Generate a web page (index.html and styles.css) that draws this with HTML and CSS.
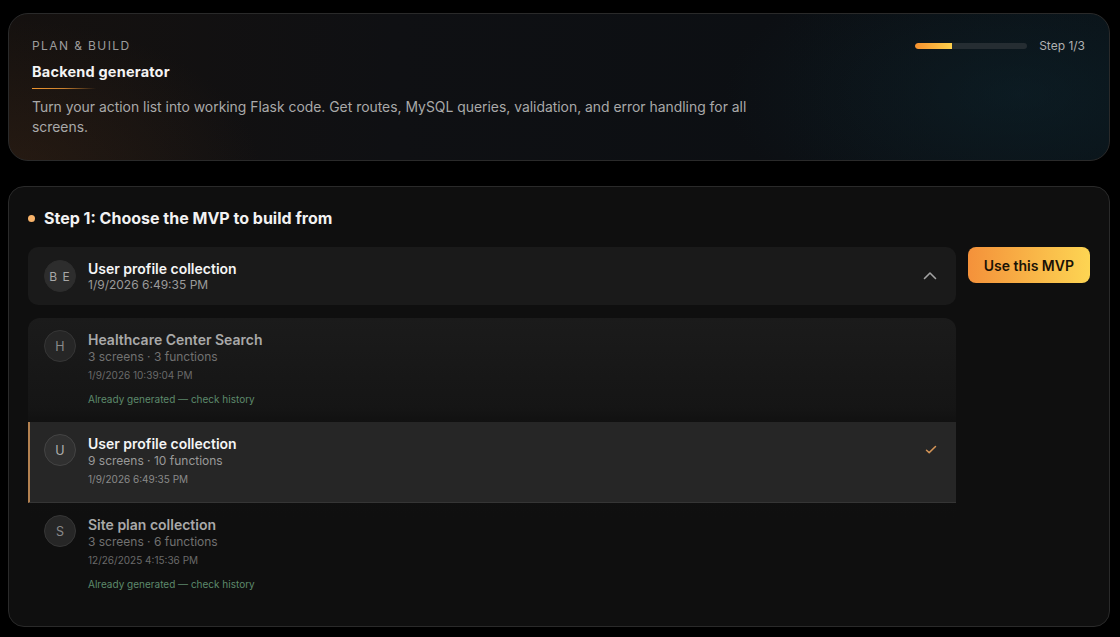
FILE: index.html
```html
<!DOCTYPE html>
<html lang="en">
<head>
<meta charset="utf-8">
<title>Backend generator</title>
<link rel="stylesheet" href="styles.css">
</head>
<body>
<section class="hero">
  <div class="hero-text">
    <div class="eyebrow">PLAN &amp; BUILD</div>
    <h1 class="hero-title">Backend generator</h1>
    <div class="hero-rule"></div>
    <p class="hero-desc">Turn your action list into working Flask code. Get routes, MySQL queries, validation, and error handling for all screens.</p>
  </div>
  <div class="progress">
    <div class="progress-track"><div class="progress-fill" style="width:33%"></div></div>
    <span class="progress-label">Step 1/3</span>
  </div>
</section>

<section class="panel">
  <h2 class="step-title"><span class="dot"></span>Step 1: Choose the MVP to build from</h2>
  <div class="select-row">
    <div class="selector">
      <div class="avatar avatar-lg">B E</div>
      <div class="sel-text">
        <div class="sel-name">User profile collection</div>
        <div class="sel-date">1/9/2026 6:49:35 PM</div>
      </div>
      <svg class="chevron" width="16" height="16" viewBox="0 0 16 16"><path d="M2.5 10.5 8 5l5.5 5.5" fill="none" stroke="#a3a3a3" stroke-width="1.6" stroke-linecap="round" stroke-linejoin="round"/></svg>
    </div>
    <button class="use-btn">Use this MVP</button>
  </div>

  <div class="list">
    <div class="item item-done">
      <div class="avatar">H</div>
      <div class="item-body">
        <div class="item-name">Healthcare Center Search</div>
        <div class="item-meta">3 screens · 3 functions</div>
        <div class="item-date">1/9/2026 10:39:04 PM</div>
        <div class="item-note">Already generated — check history</div>
      </div>
    </div>
    <div class="item item-active">
      <div class="avatar">U</div>
      <div class="item-body">
        <div class="item-name">User profile collection</div>
        <div class="item-meta">9 screens · 10 functions</div>
        <div class="item-date">1/9/2026 6:49:35 PM</div>
      </div>
      <svg class="check" width="14" height="14" viewBox="0 0 14 14"><path d="M2.5 7.2 5.2 9.6 11.5 3.5" fill="none" stroke="#d39457" stroke-width="1.5" stroke-linecap="round" stroke-linejoin="round"/></svg>
    </div>
    <div class="item item-done">
      <div class="avatar">S</div>
      <div class="item-body">
        <div class="item-name">Site plan collection</div>
        <div class="item-meta">3 screens · 6 functions</div>
        <div class="item-date">12/26/2025 4:15:36 PM</div>
        <div class="item-note">Already generated — check history</div>
      </div>
    </div>
  </div>
</section>
</body>
</html>
```

FILE: styles.css
```css
* { box-sizing: border-box; }
html, body { background: #000; }
body {
  margin: 0;
  padding: 13px 10px 0 8px;
  font-family: Inter, "Noto Sans", "Liberation Sans", sans-serif;
  color: #e5e5e5;
}

.hero {
  display: flex;
  justify-content: space-between;
  align-items: flex-start;
  height: 148px;
  padding: 24px 24px 24px 23px;
  border: 1px solid #2a2a2a;
  border-radius: 20px;
  background:
    radial-gradient(ellipse 420px 200px at 1010px 80px, rgba(14, 40, 50, 0.45), transparent 70%),
    radial-gradient(ellipse 360px 220px at 0 160px, rgba(60, 38, 22, 0.45), transparent 70%),
    linear-gradient(90deg, #15110f 0%, #0f1013 35%, #0c0f13 70%, #0a1116 100%);
}
.eyebrow {
  font-size: 12px;
  letter-spacing: 1.4px;
  color: #9c9c9c;
  line-height: 16px;
}
.hero-title {
  margin: 8px 0 0;
  font-size: 14.5px;
  font-weight: 700;
  color: #f4f4f4;
  line-height: 20px;
  letter-spacing: 0.2px;
}
.hero-rule {
  width: 64px;
  height: 1px;
  margin: 6px 0 8px;
  background: linear-gradient(90deg, #f0962f, #c9802f 50%, rgba(200, 130, 50, 0));
}
.hero-desc {
  margin: 0;
  max-width: 740px;
  font-size: 13.9px;
  line-height: 20px;
  color: #a9a9a9;
}
.progress {
  display: flex;
  align-items: center;
  gap: 12px;
  margin-top: 0;
}
.progress-track {
  width: 112px;
  height: 6px;
  border-radius: 3px;
  background: #252d32;
  overflow: hidden;
}
.progress-fill {
  height: 100%;
  border-radius: 3px 0 0 3px;
  background: linear-gradient(90deg, #f6912e, #fdd04c);
}
.progress-label {
  font-size: 12px;
  color: #b0b0b0;
  line-height: 16px;
}

.panel {
  margin-top: 25px;
  padding: 21px 19px 19px;
  border: 1px solid #2a2a2a;
  border-radius: 16px;
  background: #0f0f0f;
}
.step-title {
  display: flex;
  align-items: center;
  gap: 9px;
  margin: 0 0 19px;
  font-size: 16px;
  font-weight: 700;
  line-height: 20px;
  color: #f2f2f2;
}
.dot {
  width: 7px;
  height: 7px;
  border-radius: 50%;
  background: #f8b36a;
}

.select-row {
  display: flex;
  align-items: flex-start;
  gap: 12px;
}
.selector {
  flex: 1;
  display: flex;
  align-items: center;
  height: 58px;
  padding: 0 18px 0 16px;
  border-radius: 10px;
  background: #1a1a1a;
}
.sel-text { flex: 1; margin-left: 12px; }
.sel-name {
  font-size: 14px;
  font-weight: 600;
  line-height: 17px;
  color: #f5f5f5;
}
.sel-date {
  font-size: 12px;
  line-height: 15px;
  color: #9a9a9a;
}
.chevron { display: block; }
.use-btn {
  height: 36px;
  padding: 0 16px;
  border: 0;
  border-radius: 8px;
  background: linear-gradient(90deg, #f4913a, #fdd553);
  font-family: inherit;
  font-size: 14px;
  font-weight: 600;
  color: #1a1206;
}

.avatar {
  flex: none;
  width: 32px;
  height: 32px;
  border-radius: 50%;
  display: flex;
  align-items: center;
  justify-content: center;
  background: #262626;
  border: 1px solid #363636;
  font-size: 12.5px;
  color: #999;
}
.avatar-lg {
  background: #2d2d2d;
  border-color: #2d2d2d;
  letter-spacing: 1px;
  font-size: 12px;
  color: #a8a8a8;
}

.list {
  margin-top: 13px;
  width: calc(100% - 134px);
  border-radius: 12px 12px 0 0;
  background: linear-gradient(180deg, #1b1b1b 0, #151515 90px, #111 104px, #0f0f0f 200px);
}
.item {
  display: flex;
  align-items: flex-start;
  gap: 12px;
  padding: 12px 18px 16px 14px;
  border-left: 2px solid transparent;
}
.item-body { flex: 1; }
.item-name {
  font-size: 14px;
  font-weight: 600;
  line-height: 19px;
  color: #a9a9a9;
}
.item-meta {
  font-size: 12px;
  line-height: 16px;
  color: #717171;
}
.item-date {
  margin-top: 3px;
  font-size: 10px;
  line-height: 15px;
  color: #6a6a6a;
}
.item-note {
  margin-top: 9px;
  font-size: 10px;
  line-height: 14px;
  color: #5d8a6c;
}
.item-done .avatar { color: #8a8a8a; }
.item-active {
  background: #262626;
  border-left-color: #b38150;
  border-bottom: 1px solid #353535;
  padding-bottom: 15px;
}
.item-active .item-name { color: #f4f4f4; }
.item-active .item-meta { color: #9a9a9a; }
.item-active .item-date { color: #8a8a8a; }
.item-active .avatar { background: #303030; border-color: #444; color: #b0b0b0; }
.check { margin-top: 9px; }
```
